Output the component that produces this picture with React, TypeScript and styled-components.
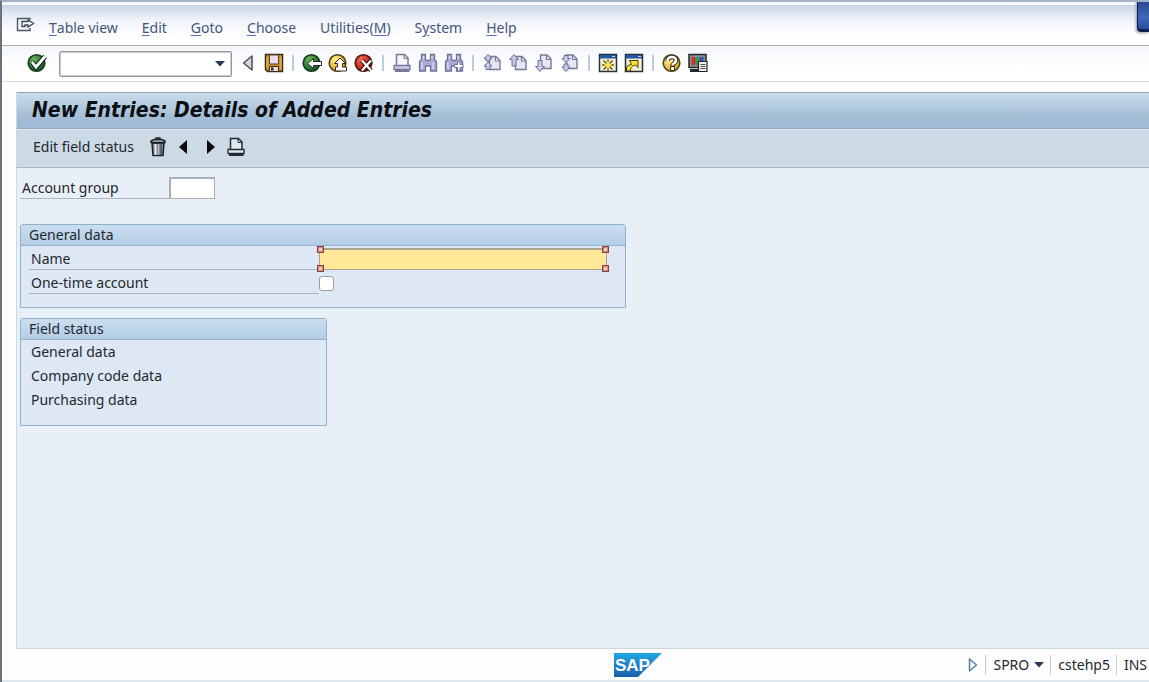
import React from 'react';
import styled, { createGlobalStyle } from 'styled-components';

const GlobalStyle = createGlobalStyle`
  *, *::before, *::after { box-sizing: border-box; }
  body {
    margin: 0;
    background: #fdfdfe;
    color: #23282d;
    font: 14px/20px "Noto Sans", "Open Sans", sans-serif;
  }
  button, input, select { font: inherit; color: inherit; }
`;

const Window = styled.div`
  position: relative;
  display: flex;
  flex-direction: column;
  min-height: 100vh;
  overflow: hidden;
  border-left: 2px solid #6a7179;
  border-top: 2px solid #a3b2c5;
`;

const CornerTab = styled.div`
  position: absolute;
  top: -2px;
  right: 0;
  width: 12px;
  height: 32px;
  border: solid #10204e;
  border-width: 0 0 3px 1px;
  border-bottom-left-radius: 4px;
  background: linear-gradient(#2a4285, #3e68bd 60%, #2c4c9c);
  box-shadow: -1px 1px 3px #8a93a8;
`;

const MenuBar = styled.nav`
  display: flex;
  align-items: center;
  gap: 24px;
  height: 44px;
  padding: 6px 0 0 14px;
  border-top: 3px solid #f4f8fd;
  border-bottom: 1px solid #a9abad;
  background: linear-gradient(#c9d4e6, #eef2f8 35%, #fefefe 75%);
`;

const PlainButton = styled.button`
  display: flex;
  align-items: center;
  justify-content: center;
  padding: 0;
  border: 0;
  background: none;
  cursor: pointer;
  white-space: pre;
`;

const MenuButton = styled(PlainButton)`
  color: #44557a;
  u { text-decoration-color: #5470b8; text-underline-offset: 2px; }
`;

const SystemMenu = styled(PlainButton)`
  margin: 0 -11px 6px 0;
`;

const ToolBar = styled.div`
  display: flex;
  align-items: center;
  gap: 6px;
  height: 36px;
  padding: 0 0 2px 25px;
  border-bottom: 1px solid #d5dde5;
  background: linear-gradient(#f3f6fa, #ffffff 60%);
`;

const IconButton = styled(PlainButton)`
  width: 20px;
  height: 20px;
`;

const Divider = styled.span`
  width: 6px;
  height: 16px;
  background: linear-gradient(#b9cddd, #b9cddd) center / 2px 100% no-repeat;
`;

const CommandBox = styled.div`
  display: flex;
  align-items: center;
  width: 173px;
  height: 26px;
  margin: 2px 0 0 6px;
  padding-right: 6px;
  border: 1px solid #96989b;
  border-radius: 2px;
  background: #fff;
  box-shadow: inset 0 0 0 1px #c9cbce;
`;

const CommandInput = styled.input`
  flex: 1;
  min-width: 0;
  padding: 0 4px;
  border: 0;
  outline: 0;
  background: none;
`;

const Screen = styled.main`
  flex: 1;
  display: flex;
  flex-direction: column;
  margin: 10px 0 0 14px;
  border-left: 1px solid #ccd9e6;
  border-bottom: 1px solid #ccd6e0;
  background: #e8eff6;
`;

const TitleBar = styled.h1`
  height: 37px;
  margin: 0;
  padding: 0 15px;
  border-top: 1px solid #8fa3b5;
  border-bottom: 1px solid #93a9bd;
  background: linear-gradient(#c9dceb, #a3bdd6 70%, #a0bad3);
  color: #0c0f12;
  font: italic bold 21px/34px "DejaVu Sans Condensed", "DejaVu Sans", sans-serif;
`;

const AppBar = styled.div`
  display: flex;
  align-items: center;
  gap: 6px;
  height: 39px;
  padding: 0 0 3px 16px;
  border-top: 1px solid #dbe5ee;
  border-bottom: 1px solid #a5b6c4;
  background: #ccdae6;
`;

const AppAction = styled(PlainButton)`
  margin-right: 8px;
`;

const Content = styled.div`
  display: flex;
  flex-direction: column;
  gap: 10px;
  padding: 9px 3px;
`;

const Field = styled.div`
  display: flex;
  align-items: flex-end;
  height: 24px;
`;

const FieldLabel = styled.label<{ $width: number }>`
  width: ${(p) => p.$width}px;
  height: 22px;
  padding-left: 2px;
  border-bottom: 1px solid #a9b6c0;
  line-height: 22px;
  white-space: nowrap;
`;

const KeyField = styled(Field)`
  height: 22px;
  margin-bottom: 15px;
`;

const KeyInput = styled.input`
  width: 46px;
  height: 22px;
  padding: 0 4px;
  border: 2px solid #a9b0b6;
  border-width: 2px 1px 1px 2px;
  background: #fff;
`;

const Group = styled.section<{ $width: number; $bottom: number }>`
  width: 100%;
  max-width: ${(p) => p.$width}px;
  padding-bottom: ${(p) => p.$bottom}px;
  border: 1px solid #8fb0cf;
  border-radius: 3px 3px 0 0;
  background: #dde8f4;
`;

const GroupTitle = styled.h2`
  height: 21px;
  margin: 0;
  padding-left: 8px;
  border-bottom: 1px solid #8fb0cf;
  background: linear-gradient(#cbdeef, #b3cde5);
  font: inherit;
`;

const GroupBody = styled.div`
  padding: 0 16px 0 8px;
`;

const FocusFrame = styled.div`
  position: relative;
  flex: 1;
  height: 22px;
  max-width: 288px;
`;

const NameInput = styled.input`
  display: block;
  width: 100%;
  height: 100%;
  padding: 0 6px;
  border: solid #a8a48f;
  border-width: 2px 1px 1px 1px;
  outline: 0;
  background: #ffe999;
`;

const Handle = styled.i<{ $right?: boolean; $bottom?: boolean }>`
  position: absolute;
  ${(p) => (p.$right ? 'right' : 'left')}: -2px;
  ${(p) => (p.$bottom ? 'bottom' : 'top')}: -2px;
  width: 7px;
  height: 7px;
  border: 1px solid #8e3f42;
  background: #f0c9b4;
  box-shadow: inset 0 0 0 1px #c98a80;
`;

const CheckBox = styled.input`
  appearance: none;
  width: 15px;
  height: 15px;
  margin: 0 0 3px;
  border: 1px solid #9a9fa4;
  border-radius: 3px;
  background: #fff;
  &:checked { background: #4c6f96; }
`;

const StatusList = styled.ul`
  margin: 0;
  padding-left: 10px;
  list-style: none;
  line-height: 24px;
`;

const StatusBar = styled.footer`
  display: flex;
  align-items: center;
  height: 33px;
  border-bottom: 2px solid #dfe6ee;
`;

const Spacer = styled.div<{ $grow: number }>`
  flex: ${(p) => p.$grow};
`;

const StatusItem = styled.div`
  display: flex;
  align-items: center;
  gap: 5px;
  padding-left: 7px;
  border-left: 1px solid #c9cdd1;
`;

const StatusGroup = styled.div`
  display: flex;
  align-items: center;
  gap: 6px;
  padding-right: 2px;
`;

const Svg = ({ w = 20, h = 20, children }: { w?: number; h?: number; children: React.ReactNode }) => (
  <svg width={w} height={h} viewBox={`0 0 ${w} ${h}`} fill="none" aria-hidden="true">{children}</svg>
);

const Ball = ({ id, light, dark, edge, children }: { id: string; light: string; dark: string; edge: string; children: React.ReactNode }) => (
  <Svg>
    <defs>
      <radialGradient id={id} cx="35%" cy="28%" r="75%">
        <stop offset="0" stopColor={light} />
        <stop offset="1" stopColor={dark} />
      </radialGradient>
    </defs>
    <circle cx="9.5" cy="10" r="8.3" fill={`url(#${id})`} stroke={edge} strokeWidth="1.6" />
    {children}
  </Svg>
);

const EnterIcon = () => (
  <Ball id="enter" light="#6fb25f" dark="#0f5220" edge="#173c22">
    <path d="M5 9l4 5L18 3.500" stroke="#12301a" strokeWidth="5" />
    <path d="M5 9l4 5L18 3.500" stroke="#fff" strokeWidth="2.800" />
  </Ball>
);

const BackIcon = () => (
  <Ball id="back" light="#64b45a" dark="#0f5a22" edge="#15371c">
    <path d="M5.500 10.500l6-5v3h8v4h-8v3z" fill="#fff" stroke="#1b2a1e" />
  </Ball>
);

const ExitIcon = () => (
  <Ball id="exit" light="#fff08a" dark="#dba10c" edge="#4f3c12">
    <path d="M12 5l5.500 5.500h-3v3.500h4v4h-11v-4h2v-3.500h-3z" fill="#fff" stroke="#3b2e14" />
  </Ball>
);

const CancelIcon = () => (
  <Ball id="cancel" light="#f06a50" dark="#b0100f" edge="#4f1210">
    <path d="M8 7.500l9 10M17 7.500l-9 10" stroke="#3a0e0e" strokeWidth="4.500" />
    <path d="M8 7.500l9 10M17 7.500l-9 10" stroke="#fff" strokeWidth="2.300" />
  </Ball>
);

const HelpIcon = () => (
  <Ball id="help" light="#fff29a" dark="#e0a416" edge="#4f4320">
    <path d="M5.500 8c0-5.500 8.500-5 8.500-.5 0 3-3.500 2.500-3.500 5.500" stroke="#3c3216" strokeWidth="4.600" />
    <path d="M8.500 13.500h4v4h-4z" fill="#fff" stroke="#3c3216" />
    <path d="M5.500 8c0-5.500 8.500-5 8.500-.5 0 3-3.500 2.500-3.500 5" stroke="#fff" strokeWidth="2.600" />
  </Ball>
);

const CollapseIcon = () => (
  <Svg w={12} h={20}>
    <path d="M10 3v14L1.500 10z" fill="#d4d6d9" stroke="#4e5156" strokeWidth="1.500" strokeLinejoin="round" />
  </Svg>
);

const SaveIcon = () => (
  <Svg>
    <path d="M1.500 1.500h17v17h-15l-2-2z" fill="#c8922c" stroke="#3e2c14" strokeWidth="1.500" />
    <path d="M5.500 2v9h9V2z" fill="#eadcec" stroke="#5e431f" />
    <path d="M5.500 13.500h9v5h-9z" fill="#e8dcea" stroke="#3e2c14" />
    <path d="M7 14.500h2.500v3H7z" fill="#3e2c14" />
    <path d="M3 4v11M17 4v12" stroke="#ecc060" />
  </Svg>
);

const PrintIcon = ({ dark = false }: { dark?: boolean }) => {
  const line = dark ? '#23292f' : '#77799a';
  return (
    <Svg>
      <path d="M4.500 13V1.500h8l3.500 3.500V13" fill={dark ? '#dce9f2' : '#f6f6fd'} stroke={line} strokeWidth="1.500" />
      <path d="M12 2v3.500h3.500" stroke={line} />
      <path d="M2 12.500h16v4H2z" fill={dark ? '#dfe6ec' : '#c9cbe6'} stroke={line} strokeWidth="1.300" />
      <path d="M3 17.800h14.500" stroke={line} strokeWidth="2.400" />
    </Svg>
  );
};

const FindIcon = ({ next = false }: { next?: boolean }) => (
  <Svg>
    <path d="M3.500 1.500h4v5l1.500 1h2l1.500-1v-5h4v5l2 2v9.500h-6v-5h-5v5h-6V8.500l2-2z" fill="#a9abd2" stroke="#6f719a" strokeWidth="1.300" />
    <path d="M4 9.500v7M15 9.500v7M5.500 3v3M14 3v3" stroke="#dcddf0" strokeWidth="1.300" />
    {next && <path d="M13.500 8.500h2.500v3h3v3h-3v3.500h-2.500v-3.500h-3v-3h3z" fill="#fff" stroke="#6f719a" />}
  </Svg>
);

const PageIcon = ({ left, children }: { left: boolean; children: React.ReactNode }) => (
  <Svg>
    <path d={left ? 'M7.500 3.500h6.500l4 4v9H7.500z' : 'M6.500 2h6.500l4 4v9.500H6.500z'} fill="#e6e6f5" stroke="#77799a" strokeWidth="1.400" />
    <path d={left ? 'M13.500 4v4H18' : 'M12.500 2.500V6.500H17'} stroke="#77799a" strokeWidth="1.200" />
    <g fill="#c6c8e4" stroke="#6f719a" strokeLinejoin="round">{children}</g>
  </Svg>
);

const FirstPageIcon = () => (
  <PageIcon left>
    <path d="M6 1.500l4 4H8v2.500H4V5.500H2zM6 9l4 4H8v3.500H4V13H2z" />
  </PageIcon>
);
const PrevPageIcon = () => (
  <PageIcon left>
    <path d="M6 1.500l4.500 5H8V13H4V6.500H1.500z" />
  </PageIcon>
);
const NextPageIcon = () => (
  <PageIcon left={false}>
    <path d="M4 7.500h4v6h2.500L6 18.500 1.500 13.500H4z" />
  </PageIcon>
);
const LastPageIcon = () => (
  <PageIcon left={false}>
    <path d="M4 2.500h4v3h2L6 9.500 2 5.500h2zM4 11h4v3h2l-4 4.500L2 14h2z" />
  </PageIcon>
);

const WindowIcon = ({ children }: { children: React.ReactNode }) => (
  <Svg>
    <path d="M1.500 1.500h17v17h-17z" fill="#f3efd0" stroke="#28303f" strokeWidth="1.500" />
    <path d="M2 2h16v3.500H2z" fill="#2157a4" />
    <path d="M14 3.500h3" stroke="#b9d3f0" />
    {children}
  </Svg>
);

const NewSessionIcon = () => (
  <WindowIcon>
    <path d="M10 6.500v11M4 12h12M5.500 7.500l9 9M14.500 7.500l-9 9" stroke="#5a5018" strokeWidth="1.400" />
    <path d="M10 8l1.500 2.500L14.500 12l-3 1.500L10 16l-1.500-2.500-3-1.500 3-1.500z" fill="#ffe93b" />
  </WindowIcon>
);

const ShortcutIcon = () => (
  <WindowIcon>
    <path d="M2.500 18v-3c0-2 2-3 5-3.500L5.500 7.500H14v7l-2.500-2.500C8 13 6.500 14 6.500 18z" fill="#ffdf2e" stroke="#3e3712" />
  </WindowIcon>
);

const LayoutIcon = () => (
  <Svg>
    <path d="M1 1.500h17v13H1z" fill="#8b9096" stroke="#24282c" strokeWidth="1.500" />
    <path d="M3.500 4h4v8h-4z" fill="#cf2f2c" />
    <path d="M7.500 4h4v8h-4z" fill="#2f9b45" />
    <path d="M11.500 4h4v8h-4z" fill="#2f52b8" />
    <path d="M2 17.500h9" stroke="#24282c" strokeWidth="3" />
    <path d="M10.500 8.500h8.500v10h-8.500z" fill="#f2f2f0" stroke="#24282c" strokeWidth="1.200" />
    <path d="M12.500 11.500h5M12.500 13.500h5M12.500 15.500h5" stroke="#4b4f54" />
  </Svg>
);

const MenuExitIcon = () => (
  <Svg w={20} h={16}>
    <path d="M14 3V1.500H1.500v12H14V11" stroke="#4d5666" strokeWidth="1.400" />
    <path d="M6 9.500v-5h6V3l5.500 3.500L12 10V8H9v1.500z" fill="#fff" stroke="#39435a" strokeWidth="1.300" />
  </Svg>
);

const TrashIcon = () => (
  <Svg>
    <path d="M4 6h12l-1 12.500H5z" fill="#7d878f" stroke="#1c2126" strokeWidth="1.500" />
    <path d="M7.500 7v11" stroke="#e6ebf0" strokeWidth="2" />
    <path d="M10.500 7v11" stroke="#a9b3bb" strokeWidth="1.500" />
    <path d="M13 7v11" stroke="#4c545b" strokeWidth="1.300" />
    <path d="M3 5.500V4l3-1.500h8L17 4v1.500z" fill="#a8b2ba" stroke="#1c2126" strokeWidth="1.400" />
    <path d="M8 2V1h4v1" stroke="#1c2126" strokeWidth="1.400" />
  </Svg>
);

const TriangleIcon = ({ d }: { d: string }) => (
  <Svg><path d={d} fill="#0b0d10" /></Svg>
);

const DownIcon = () => (
  <Svg w={10} h={6}><path d="M0 0h10L5 5.500z" fill="#27375e" /></Svg>
);

const ExpandIcon = () => (
  <Svg w={12} h={16}>
    <path d="M2.500 2l7 6-7 6z" fill="#f4f9fd" stroke="#5d7f9e" strokeWidth="1.500" strokeLinejoin="round" />
  </Svg>
);

const SapLogo = () => (
  <svg width="48" height="24" viewBox="0 0 48 24" role="img" aria-label="SAP">
    <defs>
      <linearGradient id="sap" x1="0" y1="0" x2="0" y2="1">
        <stop offset="0" stopColor="#22a7e0" />
        <stop offset="1" stopColor="#1a5fb0" />
      </linearGradient>
    </defs>
    <path d="M0 0h48L24 24H0z" fill="url(#sap)" />
    <text x="1" y="18" fill="#fff" fontFamily="Liberation Sans, sans-serif" fontWeight="700" fontSize="17">SAP</text>
  </svg>
);

const menus: [string, string, string][] = [
  ['', 'T', 'able view'],
  ['', 'E', 'dit'],
  ['', 'G', 'oto'],
  ['', 'C', 'hoose'],
  ['Utilities(', 'M', ')'],
  ['S', 'y', 'stem'],
  ['', 'H', 'elp'],
];

const toolGroups: [string, React.ReactNode][][] = [
  [['Save', <SaveIcon />]],
  [['Back', <BackIcon />], ['Exit', <ExitIcon />], ['Cancel', <CancelIcon />]],
  [['Print', <PrintIcon />], ['Find', <FindIcon />], ['Find next', <FindIcon next />]],
  [
    ['First page', <FirstPageIcon />],
    ['Previous page', <PrevPageIcon />],
    ['Next page', <NextPageIcon />],
    ['Last page', <LastPageIcon />],
  ],
  [['Create session', <NewSessionIcon />], ['Create shortcut', <ShortcutIcon />]],
  [['Help', <HelpIcon />], ['Customize local layout', <LayoutIcon />]],
];

const appTools: [string, React.ReactNode][] = [
  ['Delete', <TrashIcon />],
  ['Previous entry', <TriangleIcon d="M13 3v14L5 10z" />],
  ['Next entry', <TriangleIcon d="M7 3v14l8-7z" />],
  ['Print', <PrintIcon dark />],
];

const statuses = ['General data', 'Company code data', 'Purchasing data'];

export default function App() {
  return (
    <Window>
      <GlobalStyle />
      <MenuBar>
        <SystemMenu aria-label="System menu"><MenuExitIcon /></SystemMenu>
        {menus.map(([before, key, after]) => (
          <MenuButton key={before + key}>{before}<u>{key}</u>{after}</MenuButton>
        ))}
      </MenuBar>
      <ToolBar>
        <IconButton aria-label="Enter"><EnterIcon /></IconButton>
        <CommandBox>
          <CommandInput aria-label="Command" />
          <PlainButton aria-label="Command history"><DownIcon /></PlainButton>
        </CommandBox>
        <IconButton aria-label="Hide command field"><CollapseIcon /></IconButton>
        {toolGroups.map((group, i) => (
          <React.Fragment key={i}>
            {i > 0 && <Divider />}
            {group.map(([label, icon]) => (
              <IconButton key={label} aria-label={label}>{icon}</IconButton>
            ))}
          </React.Fragment>
        ))}
      </ToolBar>
      <Screen>
        <TitleBar>New Entries: Details of Added Entries</TitleBar>
        <AppBar>
          <AppAction>Edit field status</AppAction>
          {appTools.map(([label, icon]) => (
            <IconButton key={label} aria-label={label}>{icon}</IconButton>
          ))}
        </AppBar>
        <Content>
          <KeyField>
            <FieldLabel htmlFor="account-group" $width={149}>Account group</FieldLabel>
            <KeyInput id="account-group" />
          </KeyField>
          <Group $width={606} $bottom={13}>
            <GroupTitle>General data</GroupTitle>
            <GroupBody>
              <Field>
                <FieldLabel htmlFor="name" $width={290}>Name</FieldLabel>
                <FocusFrame>
                  <NameInput id="name" />
                  <Handle />
                  <Handle $right />
                  <Handle $bottom />
                  <Handle $right $bottom />
                </FocusFrame>
              </Field>
              <Field>
                <FieldLabel htmlFor="one-time" $width={290}>One-time account</FieldLabel>
                <CheckBox id="one-time" type="checkbox" />
              </Field>
            </GroupBody>
          </Group>
          <Group $width={307} $bottom={13}>
            <GroupTitle>Field status</GroupTitle>
            <StatusList>
              {statuses.map((s) => <li key={s}>{s}</li>)}
            </StatusList>
          </Group>
        </Content>
      </Screen>
      <StatusBar>
        <Spacer $grow={2} />
        <SapLogo />
        <Spacer $grow={1} />
        <StatusGroup>
          <PlainButton aria-label="Expand status bar"><ExpandIcon /></PlainButton>
          <StatusItem>SPRO <DownIcon /></StatusItem>
          <StatusItem>cstehp5</StatusItem>
          <StatusItem>INS</StatusItem>
        </StatusGroup>
      </StatusBar>
      <CornerTab />
    </Window>
  );
}
